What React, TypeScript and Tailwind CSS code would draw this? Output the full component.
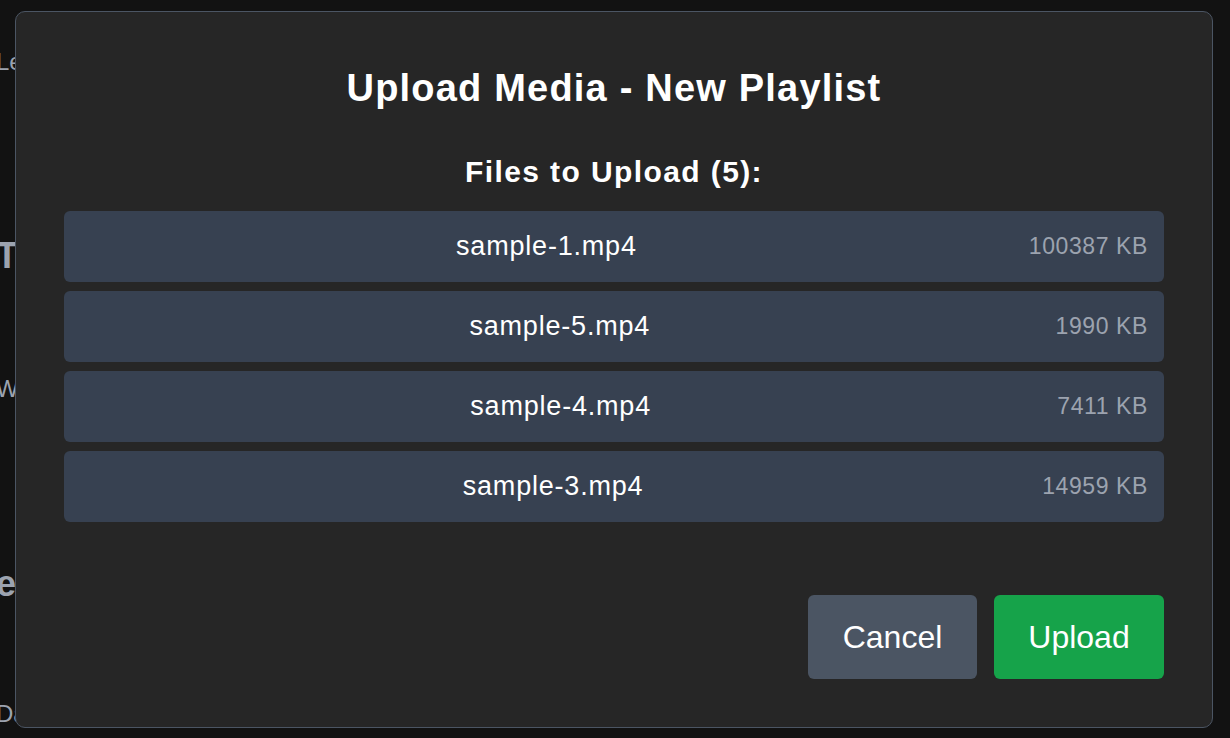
import React from "react";

interface MediaFile {
  name: string;
  sizeKb: number;
}

const files: MediaFile[] = [
  { name: "sample-1.mp4", sizeKb: 100387 },
  { name: "sample-5.mp4", sizeKb: 1990 },
  { name: "sample-4.mp4", sizeKb: 7411 },
  { name: "sample-3.mp4", sizeKb: 14959 },
  { name: "sample-2.mp4", sizeKb: 52218 },
];

export default function App() {
  return (
    <div
      className="relative h-[738px] w-full overflow-hidden bg-[#121212]"
      style={{ fontFamily: "'Liberation Sans', Arial, sans-serif" }}
    >
      {/* Page behind the modal */}
      <div className="-ml-[4px] flex flex-col text-[#9ca3af]">
        <div className="mt-[46px] text-[24px] leading-[32px]">Learn</div>
        <div className="mt-[156px] text-[36px] font-bold leading-[44px]">Title</div>
        <div className="mt-[95px] text-[24px] leading-[32px]">Welcome</div>
        <div className="mt-[157px] text-[36px] font-bold leading-[44px]">eature</div>
        <div className="mt-[92px] text-[24px] leading-[32px]">Dashboard</div>
      </div>

      {/* Modal */}
      <div className="absolute inset-0 flex items-center justify-center pr-[2px]">
        <div className="flex h-[717px] w-[1198px] flex-col rounded-[10px] border border-[#4b5563] bg-[#262626] px-12 pt-12 pb-12">
          <h2 className="text-center text-[38px] font-bold leading-[56px] tracking-[1.2px] text-white">
            Upload Media - New Playlist
          </h2>

          <h3 className="mt-[38px] text-center text-[30px] font-bold leading-[36px] tracking-[1.4px] text-white">
            Files to Upload ({files.length}):
          </h3>

          <div className="mt-[21px] flex max-h-[320px] flex-col gap-[9px] overflow-hidden">
            {files.map((file) => (
              <div
                key={file.name}
                className="flex h-[71px] shrink-0 items-center gap-4 rounded-md bg-[#374151] px-4"
              >
                <span className="flex-1 text-center text-[27px] tracking-[0.8px] text-white">
                  {file.name}
                </span>
                <span className="shrink-0 text-[23px] tracking-[0.6px] text-[#9ca3af]">
                  {file.sizeKb} KB
                </span>
              </div>
            ))}
          </div>

          <div className="mt-auto flex justify-end gap-[17px]">
            <button className="h-[84px] w-[169px] rounded-md bg-[#4b5563] text-[32px] text-white">
              Cancel
            </button>
            <button className="h-[84px] w-[170px] rounded-md bg-[#16a34a] text-[32px] text-white">
              Upload
            </button>
          </div>
        </div>
      </div>
    </div>
  );
}
